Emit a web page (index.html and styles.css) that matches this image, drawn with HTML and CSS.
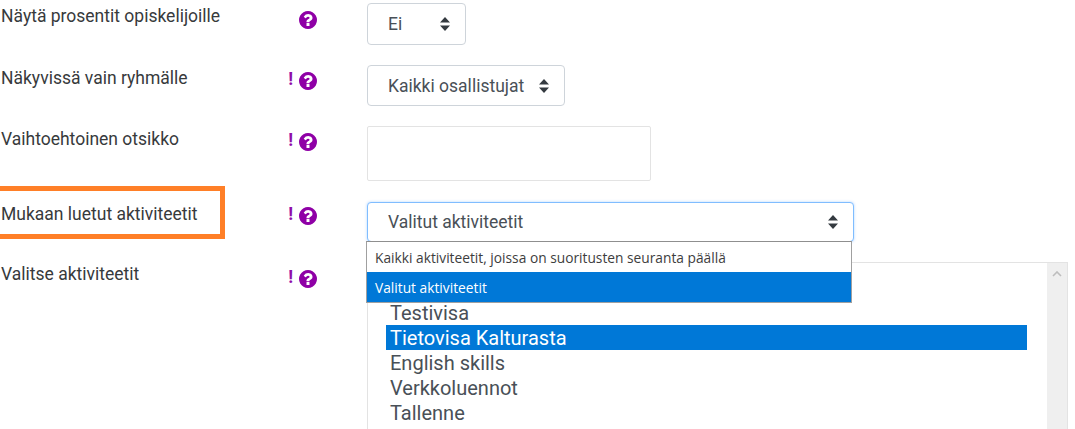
FILE: index.html
```html
<!DOCTYPE html>
<html lang="fi">
<head>
<meta charset="utf-8">
<title>Asetukset</title>
<link rel="stylesheet" href="styles.css">
</head>
<body>
<svg class="defs" width="0" height="0" aria-hidden="true">
  <symbol id="help" viewBox="0 128 1536 1536"><path d="M896 1376v-192q0-14-9-23t-23-9h-192q-14 0-23 9t-9 23v192q0 14 9 23t23 9h192q14 0 23-9t9-23zm256-672q0-88-55.500-163t-138.500-116-170-41q-243 0-371 213-15 24 8 42l132 100q7 6 19 6 16 0 25-12 53-68 86-92 34-24 86-24 48 0 85.500 26t37.500 59q0 38-20 61t-68 45q-63 28-115.500 86.500t-52.500 125.500v36q0 14 9 23t23 9h192q14 0 23-9t9-23q0-19 21.500-49.500t54.500-49.500q32-18 49-28.500t46-35 44.500-48 28-60.500 12.500-81zm384 192q0 209-103 385.500t-279.500 279.500-385.500 103-385.500-103-279.500-279.500-103-385.500 103-385.500 279.500-279.500 385.500-103 385.500 103 279.500 279.500 103 385.500z"/></symbol>
  <symbol id="sort" viewBox="0 0 10 14"><path d="M5 0 10 5.500H0zM0 8.500h10L5 14z"/></symbol>
</svg>
<form class="form">
  <div class="row row-a">
    <div class="label">Näytä prosentit opiskelijoille</div>
    <div class="icons"><svg class="help"><use href="#help"/></svg></div>
    <div class="select select-a"><span>Ei</span><svg class="sort"><use href="#sort"/></svg></div>
  </div>
  <div class="row row-b">
    <div class="label">Näkyvissä vain ryhmälle</div>
    <div class="icons"><span class="adv">!</span><svg class="help"><use href="#help"/></svg></div>
    <div class="select select-b"><span>Kaikki osallistujat</span><svg class="sort"><use href="#sort"/></svg></div>
  </div>
  <div class="row row-c">
    <div class="label">Vaihtoehtoinen otsikko</div>
    <div class="icons"><span class="adv">!</span><svg class="help"><use href="#help"/></svg></div>
    <div class="textbox"></div>
  </div>
  <div class="row row-d">
    <div class="label">Mukaan luetut aktiviteetit</div>
    <div class="icons"><span class="adv">!</span><svg class="help"><use href="#help"/></svg></div>
    <div class="select select-c"><span>Valitut aktiviteetit</span><svg class="sort"><use href="#sort"/></svg>
      <div class="dropdown">
        <div class="opt">Kaikki aktiviteetit, joissa on suoritusten seuranta päällä</div>
        <div class="opt opt-on">Valitut aktiviteetit</div>
      </div>
    </div>
  </div>
  <div class="row row-e">
    <div class="label">Valitse aktiviteetit</div>
    <div class="icons"><span class="adv">!</span><svg class="help"><use href="#help"/></svg></div>
    <div class="listbox">
      <div class="items">
        <div class="item">Testivisa</div>
        <div class="item item-on">Tietovisa Kalturasta</div>
        <div class="item">English skills</div>
        <div class="item">Verkkoluennot</div>
        <div class="item">Tallenne</div>
      </div>
      <div class="scrollbar"><svg class="chev" viewBox="0 0 10 6"><path d="M1 5 5 1l4 4" fill="none" stroke="#bdbdbd" stroke-width="1.600"/></svg></div>
    </div>
  </div>
</form>
<div class="highlight"></div>
</body>
</html>
```
FILE: styles.css
```css
html, body {
  margin: 0;
  height: 429px;
  overflow: hidden;
  background: #fff;
}
body {
  position: relative;
  font-family: Roboto, "Liberation Sans", sans-serif;
  font-size: 17.500px;
  color: #373a3c;
}
.defs { position: absolute; }
.form {
  display: flex;
  flex-direction: column;
  padding-top: 3px;
}
.row {
  display: grid;
  grid-template-columns: 284px 83px 1fr;
  align-items: start;
}
.row-a { height: 62px; }
.row-b { height: 61px; }
.row-c { height: 76px; }
.row-d { height: 60px; }
.label {
  padding-left: 1px;
  line-height: 24px;
  margin-top: 1px;
}
.row-d .label, .row-e .label { margin-top: 0; }
.icons {
  display: flex;
  align-items: center;
  justify-content: flex-end;
  gap: 6px;
  padding-right: 50px;
  height: 19px;
  margin-top: 6px;
}
.row-a .icons, .row-e .icons { margin-top: 7px; }
.row-d .icons { margin-top: 4px; }
.adv {
  font-weight: 700;
  font-size: 18px;
  line-height: 19px;
  color: #8f0ea8;
  position: relative;
  top: -2px;
}
.help {
  width: 18px;
  height: 18px;
  fill: #8f00a6;
}
.select {
  box-sizing: border-box;
  display: flex;
  align-items: center;
  justify-content: space-between;
  height: 42px;
  padding: 0 15px 0 20px;
  border: 1px solid #ced4da;
  border-radius: 4px;
  background: #fff;
  color: #495057;
}
.select-a { width: 99px; }
.select-b { width: 198px; height: 41px; }
.select-c {
  position: relative;
  width: 487px;
  height: 40px;
  border-color: #80bdff;
  box-shadow: 0 0 3px rgba(0, 123, 255, .3);
  z-index: 2;
}
.sort {
  width: 10px;
  height: 14px;
  fill: #343a40;
}
.textbox {
  box-sizing: border-box;
  width: 284px;
  height: 55px;
  border: 1px solid #e3e3e3;
  border-radius: 2px;
  background: #fff;
}
.dropdown {
  position: absolute;
  left: -2px;
  top: 38px;
  width: 486px;
  box-sizing: border-box;
  border: 1px solid #a0a0a0;
  border-top-color: #8f8f8f;
  background: #fff;
  font-family: "Open Sans", "DejaVu Sans", sans-serif;
  font-size: 13.750px;
  color: #3d3d3d;
}
.opt {
  height: 30px;
  line-height: 32px;
  padding-left: 8px;
  white-space: nowrap;
}
.opt-on {
  background: #0078d7;
  color: #fff;
}
.listbox {
  box-sizing: border-box;
  display: flex;
  width: 701px;
  height: 167px;
  border: 1px solid #e3e3e3;
  border-bottom: 0;
  background: #fff;
}
.items {
  flex: 1;
  padding: 37px 20px 0 18px;
  font-size: 20px;
  color: #495057;
}
.item {
  height: 25px;
  line-height: 27px;
  padding-left: 4px;
  white-space: nowrap;
}
.item-on {
  background: #0078d7;
  color: #fff;
}
.scrollbar {
  width: 20px;
  background: #efefef;
  display: flex;
  justify-content: center;
  align-items: flex-start;
  padding-top: 8px;
}
.chev { width: 10px; height: 6px; }
.highlight {
  position: absolute;
  left: -6px;
  top: 186px;
  width: 221px;
  height: 43px;
  border: 5px solid #ff7f27;
}
```
